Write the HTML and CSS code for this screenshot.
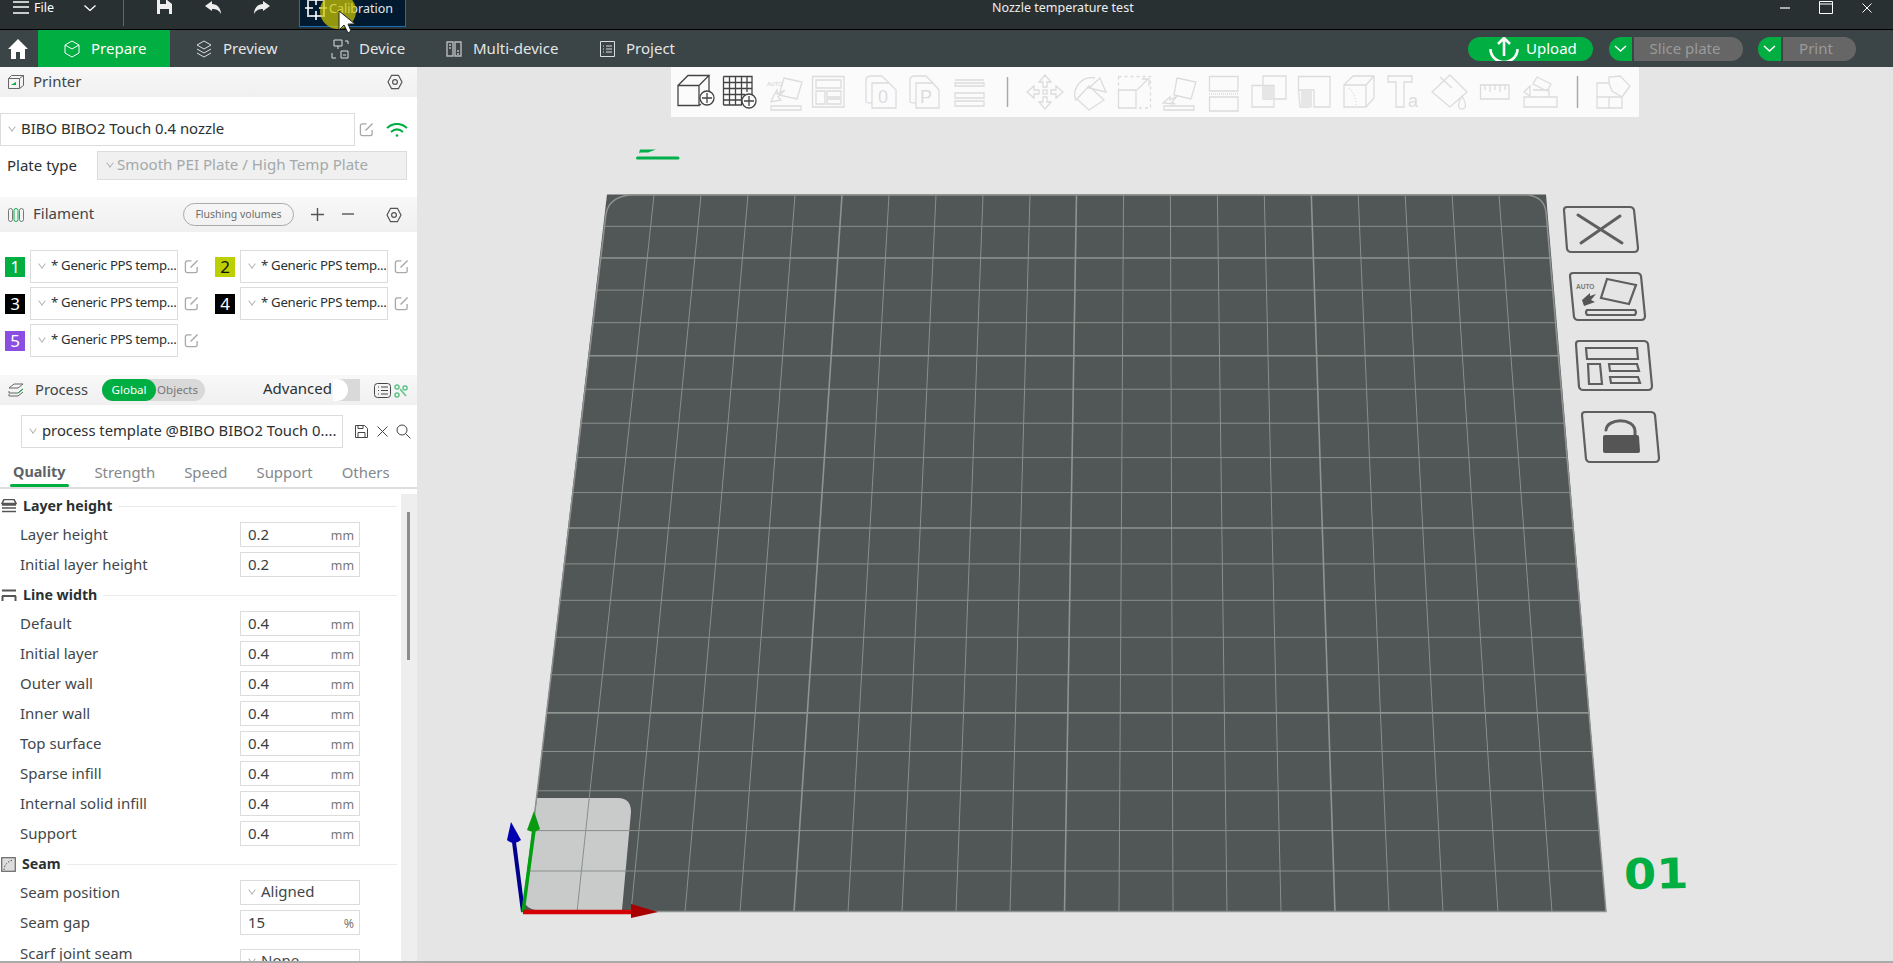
FILE: index.html
```html
<!DOCTYPE html>
<html lang="en">
<head>
    <meta charset="UTF-8">
    <title>Nozzle temperature test</title>
    <link rel="stylesheet" href="styles.css">
</head>
<body>

    <!-- Shared icons -->
    <svg class="defs" width="0" height="0">
        <symbol id="i-edit" viewBox="0 0 16 16">
            <path d="M14 8.500V12.500a2 2 0 0 1-2 2H3.500a2 2 0 0 1-2-2V4a2 2 0 0 1 2-2H8" fill="none" stroke="#a8a8a8" stroke-width="1.4"/>
            <path d="M7 9L14.500 1.500" fill="none" stroke="#a8a8a8" stroke-width="1.5"/>
        </symbol>
        <symbol id="i-gear" viewBox="0 0 16 16">
            <path d="M4.600 1.300h6.800L15 8l-3.600 6.700H4.600L1 8z" fill="none" stroke="#555" stroke-width="1.2" stroke-linejoin="round"/>
            <circle cx="8" cy="8" r="2.400" fill="none" stroke="#555" stroke-width="1.2"/>
        </symbol>
    </svg>

    <!-- Title bar -->
    <header class="titlebar">
        <svg class="menu-icon" width="16" height="14" viewBox="0 0 16 14"><path d="M0 2h16M0 7h16M0 13h16" stroke="#fff" stroke-width="1.4"/></svg>
        <span class="file-label">File</span>
        <svg class="file-chev" width="12" height="6" viewBox="0 0 12 6"><path d="M0.500 0.500L6 5.500L11.500 0.500" fill="none" stroke="#fff" stroke-width="1.3"/></svg>
        <span class="title-sep"></span>
        <svg class="save-icon" width="17" height="15" viewBox="0 0 17 15"><path d="M1 0H11L16 4V14H1z" fill="#eee"/><path d="M4 0h6v4H4zM4 9h9v5H4z" fill="#2a3133"/></svg>
        <svg class="undo-icon" width="16" height="13" viewBox="0 0 16 13"><path d="M0 5L7 0V3C12 3 16 7 16 13C14 9 11 8 7 8V10z" fill="#eee"/></svg>
        <svg class="redo-icon" width="16" height="13" viewBox="0 0 16 13"><path d="M16 5L9 0V3C4 3 0 7 0 13C2 9 5 8 9 8V10z" fill="#eee"/></svg>
        <div class="calib-btn">
            <svg width="22" height="20" viewBox="0 0 22 20"><path d="M3 0h16v16H3z" fill="none" stroke="#cfcfcf" stroke-width="2"/><path d="M0 8h8M14 8h8M11 0v5M11 11v9" stroke="#fff" stroke-width="1.6"/></svg>
            <span>Calibration</span>
        </div>
        <span class="window-title">Nozzle temperature test</span>
        <div class="win-controls">
            <svg width="10" height="2" viewBox="0 0 10 2"><path d="M0 1h10" stroke="#fff" stroke-width="1.2"/></svg>
            <svg width="14" height="13" viewBox="0 0 14 13"><path d="M.5.5h13v12H.5zM.5 3h13" fill="none" stroke="#fff"/></svg>
            <svg width="10" height="10" viewBox="0 0 10 10"><path d="M.5.5l9 9M9.500.5l-9 9" stroke="#fff"/></svg>
        </div>
    </header>

    <!-- Tabs -->
    <nav class="tabbar">
        <div class="home-tab">
            <svg width="20" height="20" viewBox="0 0 20 20"><path d="M10 0L20 10H17V20H12V13H8V20H3V10H0z" fill="#fff"/></svg>
        </div>
        <div class="tab tab-prepare">
            <svg width="16" height="18" viewBox="0 0 16 18"><path d="M8 1l7 4v8l-7 4-7-4V5zM1 5l7 4 7-4M8 9v0" fill="none" stroke="#fff"/></svg>
            <span>Prepare</span>
        </div>
        <div class="tab tab-preview">
            <svg width="16" height="18" viewBox="0 0 16 18"><path d="M8 1l7 4-7 4-7-4zM1 9l7 4 7-4M1 13l7 4 7-4" fill="none" stroke="#ddd"/></svg>
            <span>Preview</span>
        </div>
        <div class="tab tab-device">
            <svg width="18" height="20" viewBox="0 0 18 20"><path d="M3 1h8v6H3zM7 7v3M1 14v5h4M14 2h3v3M10 12h7v7h-7zM12 16h3" fill="none" stroke="#ddd"/></svg>
            <span>Device</span>
        </div>
        <div class="tab tab-multi">
            <svg width="16" height="18" viewBox="0 0 16 18"><path d="M1 2h6v14H1zM9 2h6v14H9zM3 5h2M3 8h2M11 11h2M11 14h2" fill="none" stroke="#bbb" stroke-width="1.4"/></svg>
            <span>Multi-device</span>
        </div>
        <div class="tab tab-project">
            <svg width="17" height="18" viewBox="0 0 17 18"><path d="M1.500 1.500h14v15h-14zM4 6h1M7 6h6M4 9h1M7 9h6M4 12h1M7 12h6" fill="none" stroke="#ddd"/></svg>
            <span>Project</span>
        </div>
        <div class="action-group">
            <div class="upload-btn">
                <svg width="30" height="24" viewBox="0 0 30 24"><path d="M15 19V2M9 7l6-6 6 6M1.500 12a13.500 13 0 0 0 27 0" fill="none" stroke="#fff" stroke-width="2.600"/></svg>
                <span>Upload</span>
            </div>
            <div class="split-btn split-slice">
                <span class="split-arrow"><svg width="13" height="7" viewBox="0 0 13 7"><path d="M1 1l5.500 5L12 1" fill="none" stroke="#fff" stroke-width="1.500"/></svg></span>
                <span class="split-label">Slice plate</span>
            </div>
            <div class="split-btn split-print">
                <span class="split-arrow"><svg width="13" height="7" viewBox="0 0 13 7"><path d="M1 1l5.500 5L12 1" fill="none" stroke="#fff" stroke-width="1.500"/></svg></span>
                <span class="split-label">Print</span>
            </div>
        </div>
    </nav>

    <main class="workspace">

        <!-- Left panel -->
        <aside class="sidebar">

            <div class="panel-head head-printer">
                <svg class="head-icon" width="16" height="14" viewBox="0 0 16 14"><path d="M.5 3.500h11v10H.5zM.5 3.500L3.500.5h12v10l-4 3M11.500 3.500l4-3" fill="none" stroke="#666"/><path d="M3 10l5-3v3z" fill="#00ae42"/></svg>
                <span class="head-title">Printer</span>
                <svg class="head-gear" width="16" height="16"><use href="#i-gear"/></svg>
            </div>

            <div class="printer-row">
                <div class="select printer-select">BIBO BIBO2 Touch 0.4 nozzle</div>
                <svg class="edit" width="15" height="15"><use href="#i-edit"/></svg>
                <svg class="wifi" width="22" height="14" viewBox="0 0 22 14"><path d="M1 5c6-5.500 14-5.500 20 0M5 9c4-3.500 8-3.500 12 0" fill="none" stroke="#00ae42" stroke-width="2"/><circle cx="11" cy="12.500" r="1.300" fill="#00ae42"/></svg>
            </div>

            <div class="plate-row">
                <span class="plate-label">Plate type</span>
                <div class="select plate-select">Smooth PEI Plate / High Temp Plate</div>
            </div>

            <div class="panel-head head-filament">
                <svg class="head-icon" width="16" height="14" viewBox="0 0 16 14"><g fill="none" stroke="#777"><rect x=".5" y=".5" width="4" height="13" rx="2"/><rect x="11.500" y=".5" width="4" height="13" rx="2"/><rect x="6" y=".5" width="4" height="13" rx="2" stroke="#00ae42"/></g></svg>
                <span class="head-title">Filament</span>
                <span class="flush-pill">Flushing volumes</span>
                <svg class="fil-plus" width="13" height="13" viewBox="0 0 13 13"><path d="M0 6.500h13M6.500 0v13" stroke="#555" stroke-width="1.400"/></svg>
                <svg class="fil-minus" width="12" height="2" viewBox="0 0 12 2"><path d="M0 1h12" stroke="#555" stroke-width="1.400"/></svg>
                <svg class="head-gear" width="16" height="16"><use href="#i-gear"/></svg>
            </div>

            <div class="filament-grid">
                <div class="filament">
                    <span class="swatch swatch-green">1</span>
                    <div class="select fil-select">* Generic PPS temp...</div>
                    <svg class="edit" width="15" height="15"><use href="#i-edit"/></svg>
                </div>
                <div class="filament">
                    <span class="swatch swatch-lime">2</span>
                    <div class="select fil-select">* Generic PPS temp...</div>
                    <svg class="edit" width="15" height="15"><use href="#i-edit"/></svg>
                </div>
                <div class="filament">
                    <span class="swatch swatch-black">3</span>
                    <div class="select fil-select">* Generic PPS temp...</div>
                    <svg class="edit" width="15" height="15"><use href="#i-edit"/></svg>
                </div>
                <div class="filament">
                    <span class="swatch swatch-black">4</span>
                    <div class="select fil-select">* Generic PPS temp...</div>
                    <svg class="edit" width="15" height="15"><use href="#i-edit"/></svg>
                </div>
                <div class="filament">
                    <span class="swatch swatch-purple">5</span>
                    <div class="select fil-select">* Generic PPS temp...</div>
                    <svg class="edit" width="15" height="15"><use href="#i-edit"/></svg>
                </div>
            </div>

            <div class="panel-head head-process">
                <svg class="head-icon" width="16" height="15" viewBox="0 0 16 15"><path d="M1 5l5-4h9l-5 4zM1 8l0 2h9l5-4M1 11v2h9l5-4" fill="none" stroke="#666"/><path d="M10 10l5-4" stroke="#00ae42" fill="none"/></svg>
                <span class="head-title">Process</span>
                <div class="scope-toggle">
                    <span class="scope-on">Global</span>
                    <span class="scope-off">Objects</span>
                </div>
                <span class="advanced">Advanced</span>
                <span class="adv-switch"><span class="adv-knob"></span></span>
                <svg class="list-icon" width="17" height="15" viewBox="0 0 17 15"><rect x=".5" y=".5" width="16" height="14" rx="3" fill="none" stroke="#444"/><path d="M4 4h1M7 4h7M4 7.500h1M7 7.500h7M4 11h1M7 11h7" stroke="#444"/></svg>
                <svg class="dots-icon" width="14" height="14" viewBox="0 0 14 14"><g fill="none" stroke="#5dc488" stroke-width="1.500"><circle cx="3" cy="3" r="2"/><circle cx="11" cy="4" r="2"/><circle cx="3" cy="11" r="2"/><path d="M6 5l6 7"/></g></svg>
            </div>

            <div class="process-row">
                <div class="select process-select">process template @BIBO BIBO2 Touch 0....</div>
                <svg class="proc-save" width="13" height="13" viewBox="0 0 13 13"><path d="M.5.5h9l3 3v9H.5zM3 .5v3h5v-3M3 12.500v-5h7v5" fill="none" stroke="#444"/></svg>
                <svg class="proc-x" width="11" height="11" viewBox="0 0 11 11"><path d="M.5.5l10 10M10.500.5l-10 10" stroke="#444"/></svg>
                <svg class="proc-find" width="15" height="15" viewBox="0 0 15 15"><circle cx="6" cy="6" r="5" fill="none" stroke="#444"/><path d="M9.500 9.500l5 5" stroke="#444"/></svg>
            </div>

            <div class="settings-tabs">
                <span class="set-tab set-tab-on">Quality</span>
                <span class="set-tab">Strength</span>
                <span class="set-tab">Speed</span>
                <span class="set-tab">Support</span>
                <span class="set-tab">Others</span>
            </div>

            <div class="settings">
                <div class="settings-list">

                    <div class="group-head">
                        <svg width="16" height="14" viewBox="0 0 16 14"><path d="M3 .5h10l2 4H1zM1 6h14M1 9h14M1 12.500h14" fill="none" stroke="#555" stroke-width="1.600"/></svg>
                        <span>Layer height</span>
                    </div>
                    <div class="row"><label>Layer height</label><div class="field"><span>0.2</span><em>mm</em></div></div>
                    <div class="row"><label>Initial layer height</label><div class="field"><span>0.2</span><em>mm</em></div></div>

                    <div class="group-head">
                        <svg width="16" height="12" viewBox="0 0 16 12"><path d="M1 1.500h14M1 7h14M1.500 7v5M14.500 7v5" fill="none" stroke="#555" stroke-width="2"/></svg>
                        <span>Line width</span>
                    </div>
                    <div class="row"><label>Default</label><div class="field"><span>0.4</span><em>mm</em></div></div>
                    <div class="row"><label>Initial layer</label><div class="field"><span>0.4</span><em>mm</em></div></div>
                    <div class="row"><label>Outer wall</label><div class="field"><span>0.4</span><em>mm</em></div></div>
                    <div class="row"><label>Inner wall</label><div class="field"><span>0.4</span><em>mm</em></div></div>
                    <div class="row"><label>Top surface</label><div class="field"><span>0.4</span><em>mm</em></div></div>
                    <div class="row"><label>Sparse infill</label><div class="field"><span>0.4</span><em>mm</em></div></div>
                    <div class="row"><label>Internal solid infill</label><div class="field"><span>0.4</span><em>mm</em></div></div>
                    <div class="row"><label>Support</label><div class="field"><span>0.4</span><em>mm</em></div></div>

                    <div class="group-head">
                        <svg width="15" height="15" viewBox="0 0 15 15"><rect x=".7" y=".7" width="13.600" height="13.600" fill="#ddd" stroke="#666" stroke-width="1.200"/><path d="M3 13c0-5 4-9 9-10" fill="none" stroke="#555" stroke-dasharray="1.500 1.500"/></svg>
                        <span>Seam</span>
                    </div>
                    <div class="row"><label>Seam position</label><div class="select field-select">Aligned</div></div>
                    <div class="row"><label>Seam gap</label><div class="field"><span>15</span><em>%</em></div></div>
                    <div class="row row-tall"><label>Scarf joint seam</label><div class="select field-select">None</div></div>
                </div>
                <div class="scroll-track"><span class="scroll-thumb"></span></div>
            </div>
        </aside>

        <!-- 3D view -->
        <section class="canvas">
            <svg class="bed" width="1476" height="896" viewBox="417 67 1476 896">
                <!-- Plate name marker -->
                <path d="M637.500 158H678" stroke="#00b04a" stroke-width="3" stroke-linecap="round"/>
                <path d="M640 149.500H656L648 152.500H641L639 153z" fill="#00b04a"/>

                <path d="M607 194.500H1546L1606 912H523z" fill="#515656"/>
                <path d="M537 798H618Q631 798 631 812L622 910H535Q526 908 523 900z" fill="#c8cbca"/>
                <path class="grid-line" d="M603.300 226.300H1548.600M595.900 290.100H1554M592 322.700H1556.700M584.200 389.200H1562.300M580.300 423.200H1565.100M576.200 457.600H1568M572.100 492.600H1570.900M563.800 563.900H1576.900M559.500 600.300H1579.900M555.200 637.300H1583M550.800 674.800H1586.200M541.800 751.500H1592.600M537.200 790.800H1595.900M532.500 830.600H1599.200M527.800 871H1602.600"/>
                <path class="grid-line" d="M654 195L577 912M701 195L631 912M748 195L685 912M795 195L740 912M889 195L848 912M936 195L902 912M983 195L956 912M1030 195L1010 912M1123.500 195L1119 912M1170.400 195L1173 912M1217.400 195L1227 912M1264.300 195L1281 912M1358.200 195L1389 912M1405.200 195L1443 912M1452.100 195L1498 912M1499 195L1552 912"/>
                <path class="grid-major" d="M599.600 258H1551.300M588.200 355.800H1559.500M568 528H1573.900M546.300 712.900H1589.300M842 195L794 912M1076.500 195L1064.500 912M1311.300 195L1335 912"/>
                <path d="M606 214Q609 197 630 195H1528Q1544 197 1546 212L1606 911.500H523z" fill="none" stroke="#8d928f" stroke-width="1.500"/>

                <!-- Axes -->
                <path d="M523 912L514 842" stroke="#00008f" stroke-width="4"/>
                <path d="M511 822L507 840Q514 846 521 840z" fill="#0000b0"/>
                <path d="M523 912L534 830" stroke="#00a010" stroke-width="3.500"/>
                <path d="M534 811L527 830Q534 834 540 829z" fill="#0a9a10"/>
                <path d="M523 912H632" stroke="#d40000" stroke-width="4.500"/>
                <path d="M631 904L658 912L631 918z" fill="#a80000"/>

                <!-- Plate buttons -->
                <g class="plate-btn">
                    <path d="M1567 207H1630Q1633 207 1634 210L1638 248Q1638 252 1634 252H1571Q1568 252 1567 249L1564 210Q1564 207 1567 207z"/>
                    <path class="plate-thick" d="M1578 215L1622 243M1620 216L1581 243"/>
                    <path d="M1573 273H1637Q1640 273 1641 276L1645 316Q1645 320 1641 320H1578Q1575 320 1574 317L1570 276Q1570 273 1573 273z"/>
                    <path d="M1607 279L1636 285L1629 304L1601 298z"/>
                    <path d="M1587 310H1635Q1637 312 1635 315H1587Q1585 312 1587 310z"/>
                    <path class="plate-fill" d="M1582 300L1590 293V296L1596 294L1591 300L1595 302L1584 306z"/>
                    <text class="auto-big" x="1576" y="289">AUTO</text>
                    <path d="M1579 341H1644Q1647 341 1648 344L1652 386Q1652 390 1648 390H1583Q1580 390 1579 387L1576 344Q1576 341 1579 341z"/>
                    <path d="M1586 348H1637L1638 359H1587zM1588 364H1600L1602 384H1589zM1609 364H1637L1639 371H1610zM1610 377H1638L1640 383H1611z"/>
                    <path d="M1585 412H1651Q1654 412 1655 415L1659 458Q1659 462 1655 462H1590Q1587 462 1586 459L1582 415Q1582 412 1585 412z"/>
                    <path class="plate-thick" d="M1606 430C1607 418 1634 417 1635 431V436"/>
                    <path class="plate-fill" d="M1605 435H1637Q1639 435 1639 437L1640 451Q1640 453 1638 453H1605Q1603 453 1603 451V437Q1603 435 1605 435z"/>
                </g>
            </svg>

            <span class="plate-number">01</span>

            <!-- Toolbar -->
            <svg class="toolbar" width="968" height="50" viewBox="671 67 968 50">
                <g class="tool tool-dark">
                    <path d="M678 85.500H699V105.500H678zM678 85.500L688 75.500H709L699 85.500M709 75.500V92M699 105.500L701 104"/>
                    <circle cx="707" cy="98" r="7"/><path d="M702 98H712M707 93V103"/>
                    <path d="M723.500 76.500H752V95M723.500 105H742M723.500 76.500V105M729.500 76.500V105M735.500 76.500V105M741.500 76.500V105M747 76.500V92M723.500 82.500H752M723.500 88.500H752M723.500 94.500H745M723.500 100H742"/>
                    <circle cx="749" cy="101" r="7"/><path d="M744 101H754M749 96V106"/>
                </g>
                <g class="tool">
                    <path d="M784 78L802 82L797 99L779 95zM771 106H801V110H771zM773 97L777 90V94L785 90L778 97L781 100L771 102z"/>
                    <text class="auto-small" x="767" y="86">AUTO</text>
                    <path d="M812.500 76.500H844V107H812.500zM816 80H841V88H816zM816 91H825V104H816zM827 91H841V97H827zM827 99H841V104H827z"/>
                    <path d="M882 76H871Q866 76 866 80V102Q866 103 872 103M872 83H889L896 90V108H872zM882 76L889 83"/>
                    <text class="doc-letter" x="878" y="103">0</text>
                    <path d="M926 76H915Q910 76 910 80V102Q910 103 916 103M916 83H933L939 90V108H916zM926 76L933 83"/>
                    <text class="doc-letter" x="920" y="103">P</text>
                    <path d="M955 80H984M955 83H984V86H955zM955 93H984V98H955zM955 101H984V106H955z"/>
                </g>
                <path d="M1007.500 77V107" stroke="#aaa" stroke-width="1.500"/>
                <g class="tool">
                    <path d="M1045 75L1051 82H1047V87H1043V82H1039zM1045 109L1051 102H1047V97H1043V102H1039zM1027 92L1034 86V90H1039V94H1034V98zM1063 92L1056 86V90H1051V94H1056V98z"/>
                    <rect x="1043" y="90" width="4" height="4"/>
                    <path d="M1076 101A17 17 0 0 1 1095 78M1089 88L1106 92L1100 78zM1089 86L1104 100L1089 110L1077 99z"/>
                    <path stroke-dasharray="3 3" d="M1118.500 76.500H1150.500V108H1136M1118.500 76.500V90"/>
                    <path d="M1118.500 90H1136V108H1118.500zM1137 90L1148 79M1142 79H1149V86"/>
                    <path d="M1177 78L1196 82L1191 99L1174 95zM1164 106H1194V110H1164zM1163 103L1170 97V100L1177 96L1172 102L1175 104z"/>
                    <path d="M1209.500 76.500H1238V91H1209.500zM1209.500 97H1238V111H1209.500z"/>
                    <path stroke-dasharray="1 1" d="M1209 94H1238"/>
                    <path d="M1252 85.500H1274V107H1252zM1263 76H1286V99H1263z"/>
                    <rect class="tool-hatch" x="1263" y="86" width="11" height="13"/>
                    <path d="M1298.500 76.500H1330V107H1314V90H1298.500zM1298.500 90H1310V107H1300z"/>
                    <rect class="tool-hatch" x="1301" y="90" width="11" height="17"/>
                    <path d="M1344 85H1366V107H1344zM1344 85L1353 76H1374V98L1366 107M1366 85L1374 76"/>
                    <path stroke-dasharray="1 2" d="M1349 88C1356 94 1355 100 1357 107"/>
                    <path d="M1388 76H1412V82H1404V107H1396V82H1388z"/>
                    <text class="doc-letter" x="1408" y="107">a</text>
                    <path d="M1432 92L1450 75L1467 92L1450 107zM1440 77L1452 88"/>
                    <path d="M1462 96C1458 102 1457 109 1462 109C1467 109 1466 102 1462 96z"/>
                    <path d="M1480.500 85H1509V99H1480.500zM1485 85V90M1490 85V92M1495 85V90M1500 85V92M1505 85V90"/>
                    <path d="M1537 77L1551 84L1547 91L1533 84zM1524 97H1557V107H1524zM1524 92L1530 86V96zM1533 90H1549V97"/>
                </g>
                <path d="M1577.500 76V108" stroke="#aaa" stroke-width="1.500"/>
                <g class="tool">
                    <path d="M1597 83H1609V77L1620 76L1630 86L1622 97V108H1597z"/>
                    <path d="M1609 83L1612 91L1622 97M1597 97H1622M1609 97V108"/>
                </g>
            </svg>
        </section>
    </main>

    <!-- Recording highlight over the title bar -->
    <div class="cursor-glow"></div>
    <svg class="cursor" width="18" height="24" viewBox="0 0 18 24"><path d="M1 1V20L6 15L10 23L13 21L10 14H17z" fill="#fff" stroke="#222"/></svg>

</body>
</html>
```

FILE: styles.css
```css
body {
    margin: 0;
    height: 963px;
    overflow: hidden;
    display: flex;
    flex-direction: column;
    background-color: #e5e5e5;
    font-family: "Noto Sans", Arial, sans-serif;
    color: #2b3133;
}

.defs { position: absolute; }

/* Title bar */
.titlebar {
    height: 30px;
    flex: none;
    box-sizing: border-box;
    border-bottom: 1px solid #000;
    background-color: #293032;
    display: flex;
    align-items: flex-start;
    color: #fff;
    position: relative;
}

.menu-icon { margin-left: 13px; flex: none; }
.file-label { margin-left: 5px; font-size: 12.5px; line-height: 16px; }
.file-chev { margin: 5px 0 0 30px; }
.title-sep { width: 1px; height: 26px; background: #666; margin-left: 27px; }
.save-icon { margin-left: 32px; }
.undo-icon { margin: 1px 0 0 32px; }
.redo-icon { margin: 1px 0 0 33px; }

.calib-btn {
    width: 107px;
    height: 27px;
    box-sizing: border-box;
    margin-left: 29px;
    border: 1px solid #1c6fb5;
    border-top: none;
    background-color: #011a30;
    display: flex;
    align-items: flex-start;
    padding-left: 5px;
    font-size: 12.5px;
    line-height: 17px;
    color: #e6e6e6;
}

.calib-btn span { margin-left: 2px; }

.window-title {
    margin-left: 586px;
    font-size: 12.5px;
    line-height: 16px;
    color: #eee;
}

.win-controls {
    position: absolute;
    top: 1px;
    right: 21px;
    display: flex;
    align-items: flex-start;
    gap: 29px;
}

.win-controls svg:first-child { margin-top: 6px; }
.win-controls svg:last-child { margin-top: 2px; }

/* Tabs */
.tabbar {
    height: 37px;
    flex: none;
    background-color: #3b4446;
    display: flex;
    align-items: center;
    color: #e4e6e6;
    font-size: 15px;
}

.home-tab { width: 38px; display: flex; justify-content: center; margin-left: -1px; margin-right: 1px; }

.tab {
    height: 100%;
    box-sizing: border-box;
    padding-left: 26px;
    display: flex;
    align-items: center;
    gap: 11px;
}

.tab span { margin-bottom: 2px; }

.tab-prepare { width: 132px; background-color: #00ae42; color: #fff; }
.tab-preview { width: 135px; }
.tab-device { width: 115px; gap: 10px; }
.tab-multi { width: 153px; }
.tab-project { width: 120px; gap: 10px; }

.action-group { margin-left: auto; padding-right: 37px; display: flex; }

.upload-btn {
    width: 125px;
    height: 24px;
    box-sizing: border-box;
    padding: 0 0 1px 21px;
    border-radius: 12px;
    background-color: #00ae42;
    color: #fff;
    display: flex;
    align-items: center;
    gap: 7px;
    overflow: hidden;
}

.upload-btn svg { margin-top: 1px; }

.split-btn { height: 24px; display: flex; gap: 2px; }
.split-slice { margin-left: 16px; width: 134px; }
.split-print { margin-left: 15px; width: 98px; }

.split-arrow {
    width: 23px;
    background-color: #00ae42;
    border-radius: 12px 0 0 12px;
    display: flex;
    align-items: center;
    justify-content: center;
}

.split-label {
    flex: 1;
    box-sizing: border-box;
    padding-right: 7px;
    background-color: #666;
    border-radius: 0 12px 12px 0;
    color: #9a9a9a;
    text-align: center;
    line-height: 22px;
}

/* Workspace */
.workspace {
    height: 894px;
    flex: none;
    display: flex;
    border-bottom: 2px solid #aaa;
}

.sidebar {
    width: 417px;
    flex: none;
    background-color: #fff;
    overflow: hidden;
    display: flex;
    flex-direction: column;
    font-size: 15px;
}

.panel-head {
    flex: none;
    display: flex;
    align-items: center;
    position: relative;
    background: linear-gradient(#f8f8f8, #f0f0f0);
}

.head-printer { height: 30px; }
.head-filament { height: 35px; margin-top: 17px; }
.head-process { height: 30px; margin-top: 18px; }

.head-icon { margin-left: 8px; flex: none; }
.head-title { margin: 0 0 3px 9px; font-size: 15px; color: #3f4547; }
.head-process .head-title { margin-left: 11px; font-size: 14.7px; }
.head-gear { position: absolute; right: 14px; top: 50%; margin-top: -8px; }
.head-filament .head-gear { right: 15px; }

/* Drop downs */
.select {
    box-sizing: border-box;
    border: 1px solid #dcdcdc;
    padding-bottom: 3px;
    background-color: #fff;
    display: flex;
    align-items: center;
    position: relative;
    white-space: nowrap;
    overflow: hidden;
}

.select::before {
    content: "";
    width: 5px;
    height: 5px;
    flex: none;
    border-right: 1px solid #b0b0b0;
    border-bottom: 1px solid #b0b0b0;
    transform: rotate(45deg) skew(8deg, 8deg);
    margin: -3px 6px 0 8px;
}

.printer-row { height: 33px; margin-top: 16px; flex: none; display: flex; align-items: center; }
.printer-select { width: 355px; height: 33px; font-size: 14.9px; }
.edit { flex: none; }
.printer-row .edit { margin-left: 4px; }
.wifi { margin-left: 12px; }

.plate-row { height: 29px; margin-top: 5px; flex: none; display: flex; align-items: center; }
.plate-label { margin: 0 0 2px 7px; width: 90px; font-size: 15px; }
.plate-select { width: 310px; height: 29px; background-color: #f0f0f0; color: #a3a9ab; font-size: 15.1px; padding-left: 1px; }
.plate-select::before { margin-right: 4px; }

.flush-pill {
    position: absolute;
    left: 183px;
    top: 6px;
    width: 111px;
    height: 23px;
    box-sizing: border-box;
    border: 1px solid #aaa;
    border-radius: 12px;
    font-size: 10.5px;
    line-height: 20px;
    text-align: center;
    color: #6f6f6f;
}

.fil-plus { position: absolute; left: 311px; top: 11px; }
.fil-minus { position: absolute; left: 342px; top: 16px; }

/* Filaments */
.filament-grid {
    flex: none;
    margin-top: 18px;
    padding-left: 5px;
    display: grid;
    grid-template-columns: 210px 210px;
    row-gap: 4px;
}

.filament { height: 33px; display: flex; align-items: center; }

.swatch {
    width: 20px;
    height: 20px;
    flex: none;
    margin-right: 5px;
    font-size: 17px;
    line-height: 20px;
    text-align: center;
    color: #fff;
}

.swatch-green { background-color: #00ae42; }
.swatch-lime { background-color: #bccf00; color: #111; }
.swatch-black { background-color: #000; }
.swatch-purple { background-color: #8a4fe0; }

.fil-select { width: 148px; height: 33px; font-size: 13.2px; letter-spacing: -0.3px; }
.filament .edit { margin-left: 6px; }

/* Process */
.scope-toggle {
    position: absolute;
    left: 102px;
    top: 4px;
    width: 103px;
    height: 22px;
    border-radius: 11px;
    background-color: #d9d9d9;
    display: flex;
    font-size: 11.6px;
    line-height: 21px;
}

.scope-on { width: 54px; border-radius: 11px; background-color: #00ae42; color: #fff; text-align: center; }
.scope-off { margin-left: 1px; color: #777; }

.advanced { position: absolute; left: 263px; top: 0; line-height: 27px; font-size: 15px; }

.adv-switch {
    position: absolute;
    left: 333px;
    top: 4px;
    width: 27px;
    height: 22px;
    background-color: #d9d9d9;
}

.adv-knob {
    display: block;
    width: 15px;
    height: 22px;
    border-radius: 0 11px 11px 0;
    background-color: #fff;
}

.list-icon { position: absolute; left: 374px; top: 8px; }
.dots-icon { position: absolute; left: 394px; top: 9px; }

.process-row { height: 33px; flex: none; margin-top: 10px; padding-left: 21px; display: flex; align-items: center; }
.process-select { width: 322px; height: 33px; font-size: 14.8px; }
.proc-save { margin-left: 12px; }
.proc-x { margin-left: 9px; }
.proc-find { margin-left: 8px; }

.settings-tabs {
    height: 37px;
    flex: none;
    margin-top: 4px;
    box-sizing: border-box;
    border-bottom: 2px solid #ddd;
    position: relative;
    display: flex;
    font-size: 14.9px;
    line-height: 40px;
    color: #83888a;
    padding-left: 13px;
}

.set-tab { margin-right: 29px; }
.set-tab-on { font-size: 14.4px; font-weight: bold; color: #5d6264; position: relative; }

.set-tab-on::after {
    content: "";
    position: absolute;
    left: -3px;
    right: -4px;
    bottom: 0;
    height: 3px;
    border-radius: 2px;
    background-color: #00ae42;
}

/* Settings list */
.settings { flex: 1; min-height: 0; display: flex; overflow: hidden; }
.settings-list { width: 401px; flex: none; box-sizing: border-box; padding: 4px 4px 0 0; }

.group-head {
    height: 26px;
    margin-bottom: 3px;
    display: flex;
    align-items: center;
    font-weight: bold;
    font-size: 14.2px;
}

.group-head svg { margin-left: 1px; flex: none; }
.group-head span { margin: 0 0 2px 6px; }

.group-head::after {
    content: "";
    flex: 1;
    height: 1px;
    margin-left: 6px;
    background-color: #ebebeb;
}

.row {
    height: 25px;
    margin-bottom: 5px;
    padding-left: 20px;
    display: flex;
    align-items: center;
    font-size: 15px;
    color: #41474a;
}

.row label { width: 220px; flex: none; margin-bottom: 2px; }

.field, .field-select {
    width: 120px;
    height: 25px;
    flex: none;
    box-sizing: border-box;
    border: 1px solid #dcdcdc;
    display: flex;
    align-items: center;
}

.field { padding: 0 5px 0 7px; color: #3a3f41; }
.field span { flex: 1; margin-bottom: 2px; }
.field em { font-style: normal; font-size: 12.4px; color: #777; margin-top: 2px; }

.row-tall { height: 34px; margin: 0; align-items: flex-start; }
.row-tall label { line-height: 26px; }
.row-tall .field-select { margin-top: 9px; }

.scroll-track { width: 16px; flex: none; background-color: #eee; margin-top: 5px; }
.scroll-thumb { display: block; width: 3px; height: 148px; margin: 18px 0 0 6px; background-color: #8c8c8c; }

/* 3D view */
.canvas { flex: 1; position: relative; overflow: hidden; }
.bed { position: absolute; left: 0; top: 0; }
.grid-line { fill: none; stroke: #8a8f8c; stroke-width: 1; }
.grid-major { fill: none; stroke: #8f9491; stroke-width: 1.6; }

.plate-btn path { fill: none; stroke: #5f5f5f; stroke-width: 2.2; }
.plate-btn .plate-thick { stroke-width: 3; stroke-linecap: round; }
.plate-btn .plate-fill { fill: #555; stroke: none; }
.auto-big { font: bold 6.5px "Liberation Sans", sans-serif; fill: #777; }

.plate-number {
    position: absolute;
    left: 1207px;
    top: 778px;
    font: bold 42px/60px "DejaVu Sans", sans-serif;
    color: #00ae42;
    transform-origin: left center;
    transform: rotate(-1deg) scaleX(1.1);
}

.toolbar { position: absolute; left: 254px; top: 0; background-color: #fbfbfb; }
.tool path, .tool rect, .tool circle { fill: none; stroke: #dcdcdc; stroke-width: 1.3; }
.tool-dark path, .tool-dark circle { stroke: #444; stroke-width: 1.3; }
.tool-dark circle { fill: #fbfbfb; }
.tool .tool-hatch { fill: #e6e6e6; stroke: none; }
.auto-small { font: 5.5px "Liberation Sans", sans-serif; fill: #cfcfcf; }
.doc-letter { font: 18px "Liberation Sans", sans-serif; fill: #dcdcdc; }

/* Pointer highlight */
.cursor-glow {
    position: absolute;
    left: 320px;
    top: -7px;
    width: 36px;
    height: 36px;
    border-radius: 50%;
    background-color: rgba(205, 200, 0, 0.72);
}

.cursor { position: absolute; left: 338px; top: 10px; }
```
